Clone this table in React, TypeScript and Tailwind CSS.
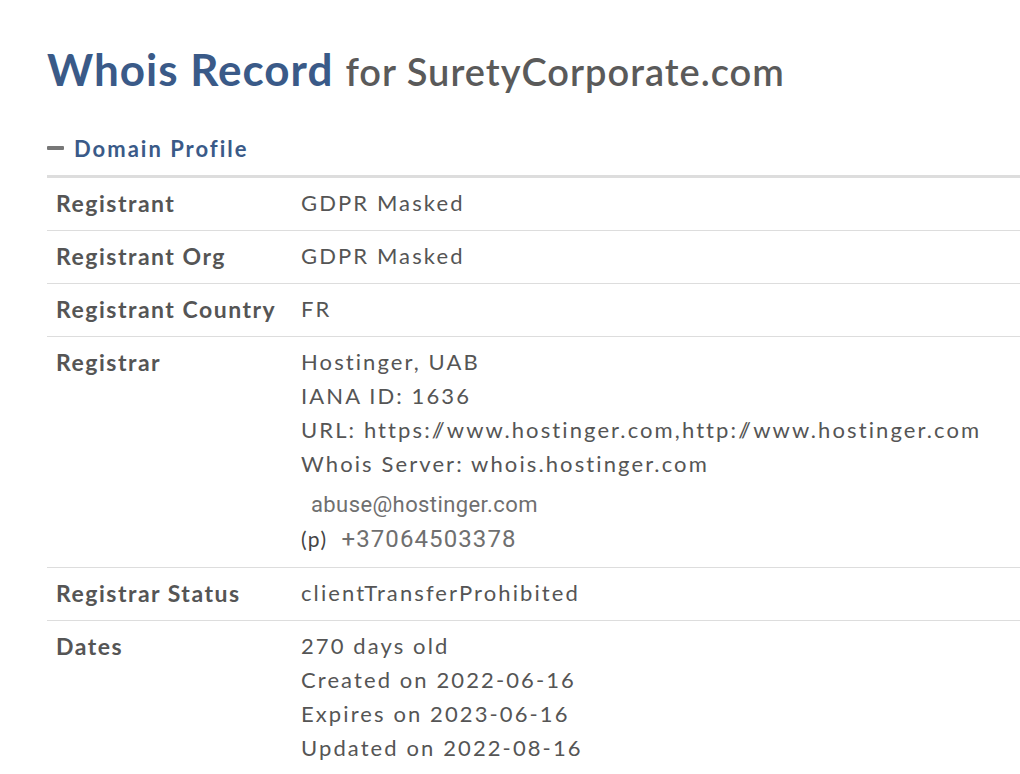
import React from "react";

const Sl = () => <span className="tracking-[-7px]">/</span>;

const rows: { label: string; lines: React.ReactNode[]; extra?: boolean }[] = [
  { label: "Registrant", lines: ["GDPR Masked"] },
  { label: "Registrant Org", lines: ["GDPR Masked"] },
  { label: "Registrant Country", lines: ["FR"] },
  {
    label: "Registrar",
    lines: [
      "Hostinger, UAB",
      "IANA ID: 1636",
      <>
        URL: https:<Sl />/www.hostinger.com,http:<Sl />/www.hostinger.com
      </>,
      "Whois Server: whois.hostinger.com",
    ],
    extra: true,
  },
  { label: "Registrar Status", lines: ["clientTransferProhibited"] },
  {
    label: "Dates",
    lines: ["270 days old", "Created on 2022-06-16", "Expires on 2023-06-16", "Updated on 2022-08-16"],
  },
];

export default function App() {
  return (
    <div className="w-[1020px] h-[774px] overflow-hidden bg-white pl-[47px] pt-[39px] font-['Lato','Open_Sans',sans-serif] text-[#555]">
      <h1 className="flex items-baseline whitespace-nowrap">
        <span className="text-[44px] font-bold text-[#3a5a88] leading-[60px] tracking-[1px]">Whois Record</span>
        <span className="ml-[12px] text-[38px] font-semibold text-[#5a5a5a] tracking-[1px]">for SuretyCorporate.com</span>
      </h1>
      <div className="mt-[33px] flex items-center h-[30px]">
        <span className="block w-[17px] h-[4px] bg-[#777] rounded-[1px]"></span>
        <span className="ml-[10px] text-[22px] font-bold text-[#3a5a88] tracking-[2px]">Domain Profile</span>
      </div>
      <div className="mt-[12px] border-t-[3px] border-[#ddd]">
        {rows.map((r) => (
          <div key={r.label} className="flex border-b border-[#ddd] pt-[8px] pb-[10px]">
            <div className="w-[254px] pl-[9px] text-[23px] font-bold leading-[34px] tracking-[1.5px] text-[#555]">
              {r.label}
            </div>
            <div className="text-[22px] leading-[34px] tracking-[2.1px] text-[#555]">
              {r.lines.map((l, i) => (
                <div key={i} className="whitespace-nowrap">{l}</div>
              ))}
              {r.extra && (
                <>
                  <div className="mt-[8px] pl-[10px] h-[32px] font-['Roboto','Liberation_Sans',Arial,sans-serif] text-[22px] leading-[32px] tracking-[0.4px] text-[#6f6f6f]">
                    abuse@hostinger.com
                  </div>
                  <div className="flex items-center h-[36px]">
                    <span className="text-[21px] tracking-[1.4px] text-[#444]">(p)</span>
                    <span className="ml-[14px] font-['Roboto','Liberation_Sans',Arial,sans-serif] text-[24px] tracking-[1.1px] text-[#6f6f6f]">
                      +37064503378
                    </span>
                  </div>
                </>
              )}
            </div>
          </div>
        ))}
      </div>
    </div>
  );
}
